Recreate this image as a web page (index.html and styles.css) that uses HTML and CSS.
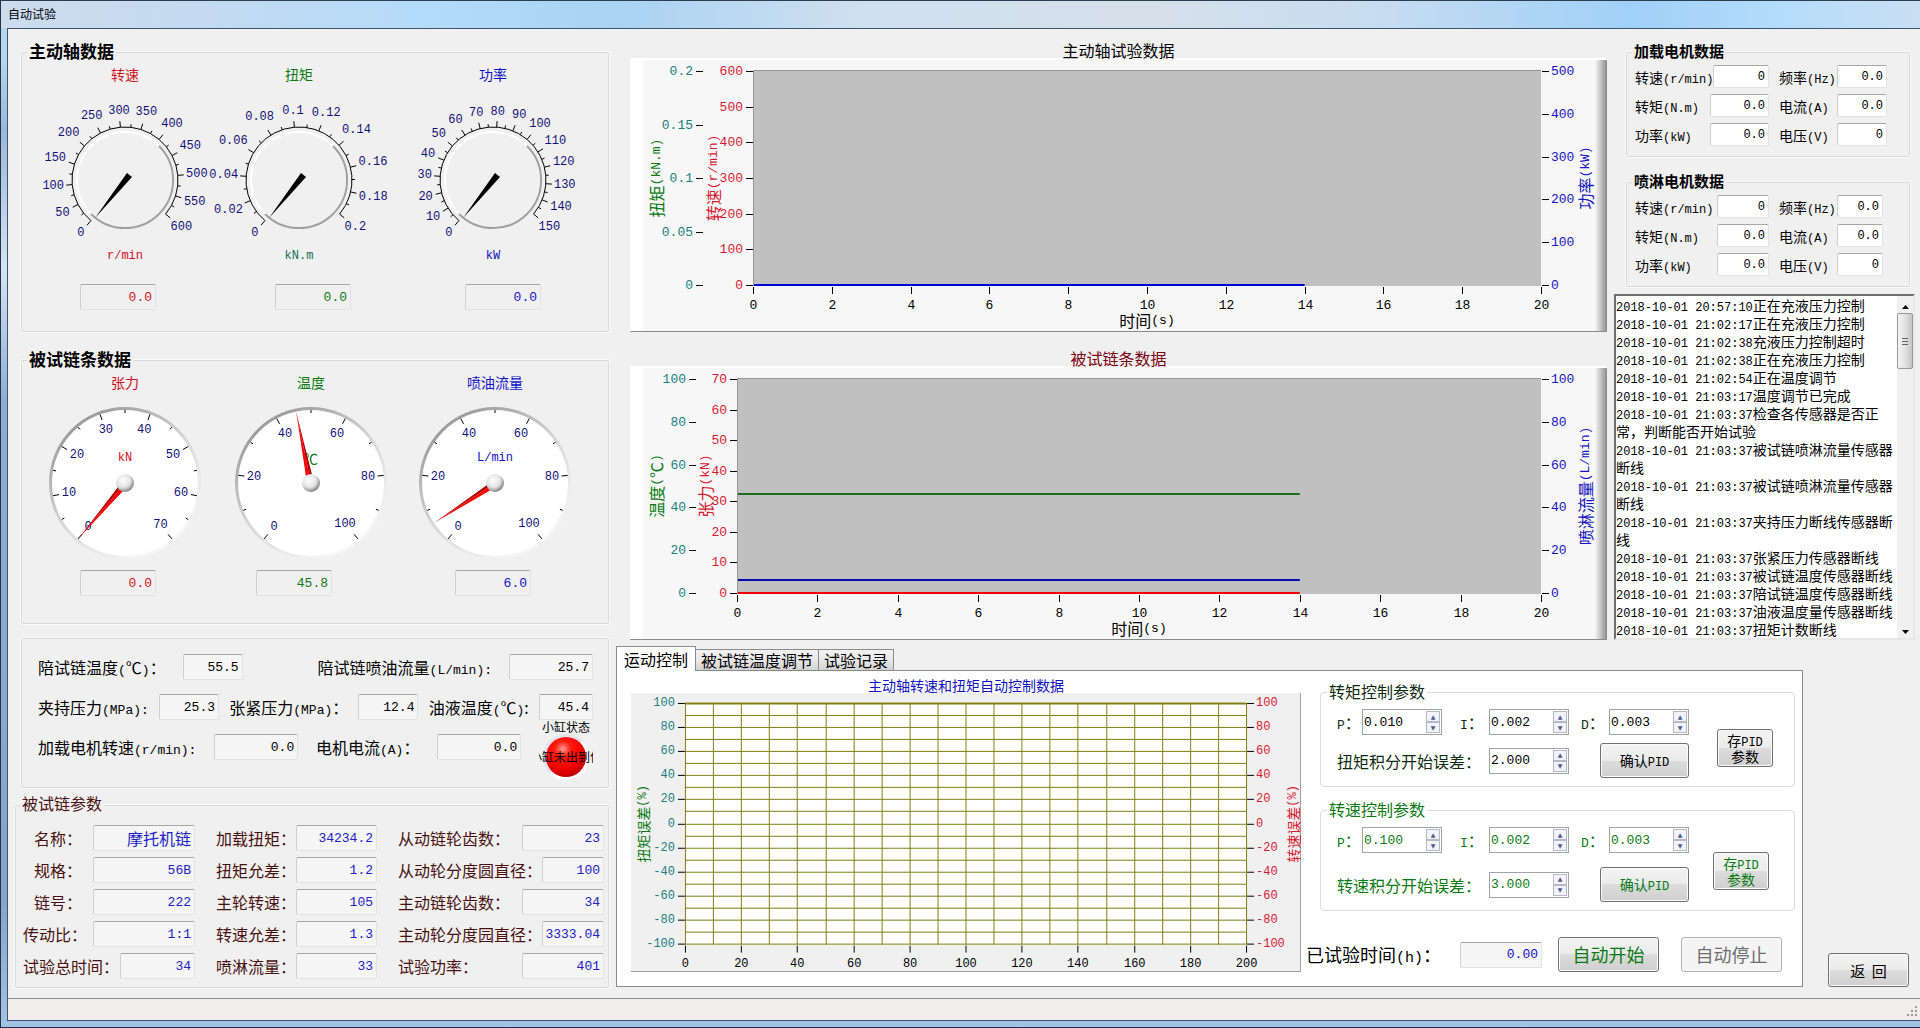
FILE: index.html
```
<!DOCTYPE html>
<html lang="zh-CN">

<head>
    <meta charset="utf-8">
    <title>自动试验</title>
    <link rel="stylesheet" href="styles.css">
</head>

<body>
    <header class="titlebar"><h1>自动试验</h1></header>

    <div class="frame">
    <main>
        <section class="left">
            <!-- driving shaft -->
            <fieldset class="group shaft">
                <legend class="bold">主动轴数据</legend>
                <div class="dials">
                    <div class="dial red">
                        <h3>转速</h3>
                        <svg class="knob" data-max="600" data-step="50" viewBox="0 0 174 164"></svg>
                        <span class="unit">r/min</span>
                    </div>
                    <div class="dial green">
                        <h3>扭矩</h3>
                        <svg class="knob" data-max="0.2" data-step="0.02" viewBox="0 0 174 164"></svg>
                        <span class="unit teal">kN.m</span>
                    </div>
                    <div class="dial blue">
                        <h3>功率</h3>
                        <svg class="knob" data-max="150" data-step="10" viewBox="0 0 174 164"></svg>
                        <span class="unit">kW</span>
                    </div>
                </div>
                <div class="readouts">
                    <input class="value red" aria-label="转速" value="0.0" readonly>
                    <input class="value green" aria-label="扭矩" value="0.0" readonly>
                    <input class="value blue" aria-label="功率" value="0.0" readonly>
                </div>
            </fieldset>

            <!-- tested chain -->
            <fieldset class="group chain">
                <legend class="bold">被试链条数据</legend>
                <div class="dials">
                    <div class="dial red">
                        <h3>张力</h3>
                        <svg class="gauge" data-max="70" data-step="10" data-value="0" data-unit="kN" viewBox="0 0 174 168"></svg>
                    </div>
                    <div class="dial green">
                        <h3>温度</h3>
                        <svg class="gauge" data-max="100" data-step="20" data-value="45.8" data-unit="℃" viewBox="0 0 174 168"></svg>
                    </div>
                    <div class="dial blue">
                        <h3>喷油流量</h3>
                        <svg class="gauge" data-max="100" data-step="20" data-value="6" data-unit="L/min" viewBox="0 0 174 168"></svg>
                    </div>
                </div>
                <div class="readouts">
                    <input class="value red" aria-label="张力" value="0.0" readonly>
                    <input class="value green" aria-label="温度" value="45.8" readonly>
                    <input class="value blue" aria-label="喷油流量" value="6.0" readonly>
                </div>
            </fieldset>

            <fieldset class="group sensors">
                <div class="row">
                    <label for="s1">陪试链温度<span class="en">(</span>℃<span class="en">)</span>：</label>
                    <input class="value w60" id="s1" value="55.5" readonly>
                    <label class="push" for="s2">陪试链喷油流量<span class="en">(L/min):</span></label>
                    <input class="value w84" id="s2" value="25.7" readonly>
                </div>
                <div class="row">
                    <label for="s3">夹持压力<span class="en">(MPa):</span></label>
                    <input class="value w60" id="s3" value="25.3" readonly>
                    <label for="s4">张紧压力<span class="en">(MPa)</span>：</label>
                    <input class="value w60" id="s4" value="12.4" readonly>
                    <label for="s5">油液温度<span class="en">(</span>℃<span class="en">)</span>:</label>
                    <input class="value w54" id="s5" value="45.4" readonly>
                </div>
                <div class="row">
                    <label for="s6">加载电机转速<span class="en">(r/min):</span></label>
                    <input class="value w84" id="s6" value="0.0" readonly>
                    <label for="s7">电机电流<span class="en">(A)</span>：</label>
                    <input class="value w84" id="s7" value="0.0" readonly>
                    <div class="led">
                        <span>小缸状态</span>
                        <div class="lamp"><i></i><b>小缸未出到位</b></div>
                    </div>
                </div>
            </fieldset>

            <fieldset class="group params">
                <legend>被试链参数</legend>
                <div class="cell indent"><label for="p1">名称：</label><input class="value cn w102" id="p1" value="摩托机链" readonly></div>
                <div class="cell"><label for="p2">加载扭矩：</label><input class="value w82" id="p2" value="34234.2" readonly></div>
                <div class="cell"><label for="p3">从动链轮齿数：</label><input class="value w82" id="p3" value="23" readonly></div>
                <div class="cell indent"><label for="p4">规格：</label><input class="value w102" id="p4" value="56B" readonly></div>
                <div class="cell"><label for="p5">扭矩允差：</label><input class="value w82" id="p5" value="1.2" readonly></div>
                <div class="cell"><label for="p6">从动轮分度圆直径：</label><input class="value w64" id="p6" value="100" readonly></div>
                <div class="cell indent"><label for="p7">链号：</label><input class="value w102" id="p7" value="222" readonly></div>
                <div class="cell"><label for="p8">主轮转速：</label><input class="value w82" id="p8" value="105" readonly></div>
                <div class="cell"><label for="p9">主动链轮齿数：</label><input class="value w82" id="p9" value="34" readonly></div>
                <div class="cell"><label for="p10">传动比：</label><input class="value w102" id="p10" value="1:1" readonly></div>
                <div class="cell"><label for="p11">转速允差：</label><input class="value w82" id="p11" value="1.3" readonly></div>
                <div class="cell"><label for="p12">主动轮分度园直径：</label><input class="value w64" id="p12" value="3333.04" readonly></div>
                <div class="cell"><label for="p13">试验总时间：</label><input class="value w75" id="p13" value="34" readonly></div>
                <div class="cell"><label for="p14">喷淋流量：</label><input class="value w82" id="p14" value="33" readonly></div>
                <div class="cell"><label for="p15">试验功率：</label><input class="value w82" id="p15" value="401" readonly></div>
            </fieldset>
        </section>

        <section class="right">
            <div class="top">
                <div class="scopes">
                    <h2>主动轴试验数据</h2>
                    <svg class="scope" id="shaft-chart" viewBox="0 0 977 274"></svg>
                    <h2 class="maroon">被试链条数据</h2>
                    <svg class="scope" id="chain-chart" viewBox="0 0 977 274"></svg>
                </div>

                <aside class="side">
                    <fieldset class="group motor">
                        <legend class="bold">加载电机数据</legend>
                        <div class="cell"><label for="m1">转速<span class="en">(r/min)</span></label><input class="value" id="m1" value="0" readonly></div>
                        <div class="cell"><label for="m2">频率<span class="en">(Hz)</span></label><input class="value" id="m2" value="0.0" readonly></div>
                        <div class="cell"><label for="m3">转矩<span class="en">(N.m)</span></label><input class="value" id="m3" value="0.0" readonly></div>
                        <div class="cell"><label for="m4">电流<span class="en">(A)</span></label><input class="value" id="m4" value="0.0" readonly></div>
                        <div class="cell"><label for="m5">功率<span class="en">(kW)</span></label><input class="value" id="m5" value="0.0" readonly></div>
                        <div class="cell"><label for="m6">电压<span class="en">(V)</span></label><input class="value" id="m6" value="0" readonly></div>
                    </fieldset>
                    <fieldset class="group motor spray">
                        <legend class="bold">喷淋电机数据</legend>
                        <div class="cell"><label for="n1">转速<span class="en">(r/min)</span></label><input class="value" id="n1" value="0" readonly></div>
                        <div class="cell"><label for="n2">频率<span class="en">(Hz)</span></label><input class="value" id="n2" value="0.0" readonly></div>
                        <div class="cell"><label for="n3">转矩<span class="en">(N.m)</span></label><input class="value" id="n3" value="0.0" readonly></div>
                        <div class="cell"><label for="n4">电流<span class="en">(A)</span></label><input class="value" id="n4" value="0.0" readonly></div>
                        <div class="cell"><label for="n5">功率<span class="en">(kW)</span></label><input class="value" id="n5" value="0.0" readonly></div>
                        <div class="cell"><label for="n6">电压<span class="en">(V)</span></label><input class="value" id="n6" value="0" readonly></div>
                    </fieldset>

                    <div class="log">
                        <div class="lines">
                            <p><time>2018-10-01 20:57:10</time>正在充液压力控制</p>
                            <p><time>2018-10-01 21:02:17</time>正在充液压力控制</p>
                            <p><time>2018-10-01 21:02:38</time>充液压力控制超时</p>
                            <p><time>2018-10-01 21:02:38</time>正在充液压力控制</p>
                            <p><time>2018-10-01 21:02:54</time>正在温度调节</p>
                            <p><time>2018-10-01 21:03:17</time>温度调节已完成</p>
                            <p><time>2018-10-01 21:03:37</time>检查各传感器是否正常，判断能否开始试验</p>
                            <p><time>2018-10-01 21:03:37</time>被试链喷淋流量传感器断线</p>
                            <p><time>2018-10-01 21:03:37</time>被试链喷淋流量传感器断线</p>
                            <p><time>2018-10-01 21:03:37</time>夹持压力断线传感器断线</p>
                            <p><time>2018-10-01 21:03:37</time>张紧压力传感器断线</p>
                            <p><time>2018-10-01 21:03:37</time>被试链温度传感器断线</p>
                            <p><time>2018-10-01 21:03:37</time>陪试链温度传感器断线</p>
                            <p><time>2018-10-01 21:03:37</time>油液温度量传感器断线</p>
                            <p><time>2018-10-01 21:03:37</time>扭矩计数断线</p>
                        </div>
                        <div class="scrollbar">
                            <button aria-label="向上"><svg width="7" height="4"><path d="M0 4L3.5 0L7 4z" /></svg></button>
                            <div class="thumb"></div>
                            <button class="down" aria-label="向下"><svg width="7" height="4"><path d="M0 0L3.5 4L7 0z" /></svg></button>
                        </div>
                    </div>
                </aside>
            </div>

            <div class="bottom">
                <div class="tabs">
                    <div class="tablist" role="tablist">
                        <button class="tab active" role="tab" aria-selected="true">运动控制</button>
                        <button class="tab" role="tab" aria-selected="false">被试链温度调节</button>
                        <button class="tab" role="tab" aria-selected="false">试验记录</button>
                    </div>
                    <div class="pane" role="tabpanel">
                        <div class="error-chart">
                            <h2>主动轴转速和扭矩自动控制数据</h2>
                            <svg id="error-chart" viewBox="0 0 671 279"></svg>
                        </div>
                        <div class="controls">
                            <fieldset class="pid torque">
                                <legend>转矩控制参数</legend>
                                <div class="pid-grid">
                                    <label for="tp"><span class="en">P</span>：</label>
                                    <span class="spin"><input type="number" step="0.001" id="tp" value="0.010"><button aria-label="增加">▲</button><button aria-label="减少">▼</button></span>
                                    <label for="ti"><span class="en">I</span>：</label>
                                    <span class="spin"><input type="number" step="0.001" id="ti" value="0.002"><button aria-label="增加">▲</button><button aria-label="减少">▼</button></span>
                                    <label for="td"><span class="en">D</span>：</label>
                                    <span class="spin"><input type="number" step="0.001" id="td" value="0.003"><button aria-label="增加">▲</button><button aria-label="减少">▼</button></span>
                                    <label class="wide" for="te">扭矩积分开始误差：</label>
                                    <span class="spin"><input type="number" step="0.001" id="te" value="2.000"><button aria-label="增加">▲</button><button aria-label="减少">▼</button></span>
                                    <button class="btn confirm">确认<span class="en">PID</span></button>
                                </div>
                                <button class="btn save">存<span class="en">PID</span><br>参数</button>
                            </fieldset>
                            <fieldset class="pid speed">
                                <legend>转速控制参数</legend>
                                <div class="pid-grid">
                                    <label for="sp"><span class="en">P</span>：</label>
                                    <span class="spin"><input type="number" step="0.001" id="sp" value="0.100"><button aria-label="增加">▲</button><button aria-label="减少">▼</button></span>
                                    <label for="si"><span class="en">I</span>：</label>
                                    <span class="spin"><input type="number" step="0.001" id="si" value="0.002"><button aria-label="增加">▲</button><button aria-label="减少">▼</button></span>
                                    <label for="sd"><span class="en">D</span>：</label>
                                    <span class="spin"><input type="number" step="0.001" id="sd" value="0.003"><button aria-label="增加">▲</button><button aria-label="减少">▼</button></span>
                                    <label class="wide" for="se">转速积分开始误差：</label>
                                    <span class="spin"><input type="number" step="0.001" id="se" value="3.000"><button aria-label="增加">▲</button><button aria-label="减少">▼</button></span>
                                    <button class="btn confirm">确认<span class="en">PID</span></button>
                                </div>
                                <button class="btn save">存<span class="en">PID</span><br>参数</button>
                            </fieldset>
                            <div class="run">
                                <label for="elapsed">已试验时间<span class="en">(h)</span>：</label>
                                <input class="value w82 blue" id="elapsed" value="0.00" readonly>
                                <button class="btn green">自动开始</button>
                                <button class="btn" disabled>自动停止</button>
                            </div>
                        </div>
                    </div>
                </div>
                <button class="btn back">返&nbsp; 回</button>
            </div>
        </section>
    </main>

    <footer class="statusbar">
        <svg width="12" height="12" fill="#9a9a9a"><path d="M8 0h2v2h-2zM4 4h2v2h-2zM8 4h2v2h-2zM0 8h2v2h-2zM4 8h2v2h-2zM8 8h2v2h-2z" /></svg>
    </footer>
    </div>

    <script src="script.js"></script>
</body>

</html>
```
FILE: styles.css
```
* {
    box-sizing: border-box;
    margin: 0;
    padding: 0;
}

body {
    --en: 13px;
    display: flex;
    flex-direction: column;
    min-height: 100vh;
    background: linear-gradient(#b8d4ee 60px, #9cb8d8 130px, #d4e4f4 270px, #8fadd4 400px, #86a3cc 900px, #a3c3e3);
    border-top: 1px solid #2c3e50;
    border-left: 1px solid #243444;
    border-bottom: 1px solid #1c2c44;
    font: 16px/20px "Noto Sans CJK SC", sans-serif;
    color: #000;
}

h1, h2, h3 {
    font-weight: normal;
}

.en, time, input, .unit {
    font-family: "Liberation Mono", monospace;
    font-size: var(--en);
    line-height: 1;
}

.red { color: #d01020; }
.green { color: #0a7a12; }
.blue { color: #1010c8; }
.teal { color: #107050; }

/* window */
.titlebar {
    height: 27px;
    padding: 3px 7px;
    background: linear-gradient(90deg, #cddcee, #c4daf0 10%, #b4dbfa 22%, #a9d2f3 32%, #cfe0ef 45%, #d6e0ea 60%, #c6dcf0 72%, #9fd0f8 85%, #b5dcfb 93%, #c9dff2);
}

.titlebar h1 {
    font-size: 12px;
}

.frame {
    flex: 1;
    display: flex;
    flex-direction: column;
    margin: 0 0 6px 6px;
    border: 1px solid #3d566e;
    border-right: 0;
    background: #f0f0f0;
}

main {
    flex: 1;
    display: grid;
    grid-template-columns: 594px 1fr;
    gap: 7px;
    padding: 13px 5px 10px 7px;
}

.statusbar {
    display: flex;
    justify-content: flex-end;
    align-items: flex-end;
    height: 22px;
    padding: 0 1px 2px 0;
    border-top: 1px solid #8c8c8c;
    background: #f1edec;
}

/* group boxes */
.group {
    min-width: 0;
    border: 1px solid #d6d8da;
    border-radius: 2px;
    box-shadow: 0 0 0 1px #fafafa;
}

.group legend {
    height: 20px;
    margin-left: 5px;
    padding: 0 2px;
    background: #f0f0f0;
    line-height: 17px;
}

legend.bold {
    font-size: 17px;
    font-weight: bold;
}

.value {
    height: 26px;
    min-width: 0;
    padding-right: 3px;
    border: 1px solid #e2e2e2;
    border-top-color: #a6a6a6;
    border-left-color: #cfcfcf;
    border-radius: 2px;
    background: #f5f5f5;
    text-align: right;
}

.value.cn {
    font-family: "Noto Sans CJK SC", sans-serif;
    font-size: 16px;
}

.w54 { width: 54px; }
.w60 { width: 60px; }
.w64 { width: 64px; }
.w75 { width: 75px; }
.w82 { width: 82px; }
.w84 { width: 84px; }
.w102 { width: 102px; }

/* left column */
.left {
    display: flex;
    flex-direction: column;
}

.left .group {
    margin-left: 6px;
}

.shaft {
    height: 290px;
}

.left .chain {
    height: 274px;
    margin-top: 18px;
}

.dials {
    display: grid;
    padding: 2px 0 0 16px;
}

.shaft .dials {
    grid-template-columns: 174px 174px 214px;
}

.chain .dials {
    grid-template-columns: 174px 198px 170px;
}

.dial {
    --en: 12px;
    display: flex;
    flex-direction: column;
    align-items: center;
    font-size: 14px;
}

.dial h3 {
    font-size: 14px;
}

.unit {
    line-height: 16px;
}

.knob {
    width: 174px;
    height: 164px;
    overflow: visible;
}

.gauge {
    width: 174px;
    height: 168px;
    margin-top: 2px;
    overflow: visible;
}

.readouts {
    display: grid;
    padding-left: 58px;
}

.shaft .readouts {
    grid-template-columns: 195px 190px 76px;
    margin-top: 20px;
}

.chain .readouts {
    grid-template-columns: 176px 199px 76px;
    margin-top: 8px;
}

.readouts .value {
    width: 76px;
    background: #f0f0f0;
}

.left .sensors {
    display: flex;
    flex-direction: column;
    height: 150px;
    margin-top: 14px;
    padding: 8px 15px 0 16px;
}

.row {
    display: flex;
    align-items: center;
    justify-content: space-between;
    height: 40px;
    white-space: nowrap;
}

.row .push {
    margin-left: 58px;
}

.led {
    display: flex;
    flex-direction: column;
    align-items: center;
    width: 54px;
    padding-top: 8px;
    font-size: 12px;
    line-height: 12px;
}

.lamp {
    display: grid;
    grid-template-columns: 54px;
    place-items: center;
    height: 48px;
    overflow: hidden;
}

.lamp i, .lamp b {
    grid-area: 1 / 1;
}

.lamp i {
    width: 46px;
    height: 46px;
    border: 3px solid #e2e4e8;
    border-right-color: #fff;
    border-bottom-color: #fff;
    border-radius: 50%;
    background: radial-gradient(circle at 42% 30%, #ff9a90, #ff1c10 22%, #f00000 55%, #900000);
}

.lamp b {
    font-weight: normal;
}

.left .params {
    display: grid;
    grid-template-columns: 172px 161px 206px;
    grid-auto-rows: 32px;
    justify-content: space-between;
    height: 193px;
    margin: 7px 0 0;
    padding: 7px 4px 0 7px;
    color: #4a1010;
}

.params legend {
    margin-left: -3px;
}

.params .value {
    color: #2020c8;
}

.cell {
    display: flex;
    align-items: center;
    justify-content: space-between;
    white-space: nowrap;
}

.cell.indent {
    padding-left: 11px;
}

/* charts */
.right {
    display: flex;
    flex-direction: column;
    gap: 6px;
    min-width: 0;
}

.top {
    display: flex;
    gap: 7px;
    padding-left: 14px;
}

.scopes {
    flex: 1;
    min-width: 0;
}

.scopes h2 {
    font-size: 16px;
    line-height: 16px;
    text-align: center;
}

.scopes h2.maroon {
    margin-top: 18px;
    color: #800010;
}

.scope {
    display: block;
    width: 100%;
    border-radius: 1px;
    background: linear-gradient(90deg, #fff 13px, #f7f7f7 13px, #f7f7f7 calc(100% - 12px), #8c8c8c);
    box-shadow: inset 0 2px #fff, inset -1px -1px #8a8a8a;
}

svg text {
    dominant-baseline: central;
    font-family: "Noto Sans CJK SC", sans-serif;
    font-size: 16px;
}

.dial text, .error-chart text {
    font-size: 14px;
}

svg text.num, svg .en {
    font-family: "Liberation Mono", monospace;
    font-size: var(--en);
}

#error-chart {
    --en: 12px;
    display: block;
    width: 100%;
    background: #f0f0f0;
    box-shadow: inset -1px -1px #a0a0a0;
}

.ax-red { fill: #d81830; }
.ax-teal { fill: #188080; }
.ax-green { fill: #087a10; }
.ax-blue { fill: #1414c0; }
.ax-navy { fill: #101078; }

/* motor data and message log */
.side {
    --en: 12px;
    display: flex;
    flex-direction: column;
    flex: none;
    width: 301px;
    font-size: 14px;
}

.motor {
    display: grid;
    grid-template-columns: 134px 108px;
    grid-auto-rows: 29px;
    column-gap: 10px;
    height: 115px;
    margin: 0 5px 0 12px;
    padding-left: 8px;
}

.motor legend {
    margin-left: -3px;
    font-size: 15px;
}

.motor .value {
    width: 59px;
    height: 23px;
    background: #fff;
}

.motor .cell:nth-of-type(even) .value {
    width: 50px;
}

.spray {
    grid-template-columns: 134px 104px;
    margin-top: 15px;
}

.spray .value {
    width: 52px;
}

.spray .cell:nth-of-type(even) .value {
    width: 46px;
}

.log {
    display: flex;
    flex: 1 1 0;
    min-height: 0;
    margin-top: 7px;
    border: 2px solid #e8e8e8;
    border-top-color: #6e6e6e;
    border-left-color: #6e6e6e;
    background: #fff;
    overflow: hidden;
}

.lines {
    flex: 1;
    line-height: 18px;
}

.lines p {
    margin-right: -1px;
}

.scrollbar {
    display: flex;
    flex-direction: column;
    width: 16px;
    background: #f0f0f0;
}

.scrollbar button {
    height: 17px;
    border: 0;
    background: none;
    line-height: 1;
}

.scrollbar .down {
    margin-top: auto;
}

.thumb {
    height: 56px;
    border: 1px solid #989898;
    border-radius: 2px;
    background: linear-gradient(#606060, #606060) 4px 24px / 6px 1px no-repeat,
        linear-gradient(#606060, #606060) 4px 27px / 6px 1px no-repeat,
        linear-gradient(#606060, #606060) 4px 30px / 6px 1px no-repeat,
        linear-gradient(90deg, #f4f4f4, #e2e2e2 50%, #c4c4c4);
}

/* tab control */
.bottom {
    display: flex;
    align-items: flex-end;
    gap: 25px;
    padding-right: 6px;
}

.tabs {
    flex: 1;
    min-width: 0;
}

.tablist {
    display: flex;
    align-items: flex-end;
    height: 24px;
}

.tab {
    height: 21px;
    padding: 0 5px;
    border: 1px solid #8a8a8a;
    border-left-width: 0;
    border-bottom: 0;
    background: linear-gradient(#f2f2f2, #e8e8e8 50%, #d2d2d2);
    font: 16px/20px "Noto Sans CJK SC", sans-serif;
}

.tab.active {
    z-index: 1;
    height: 25px;
    margin-bottom: -1px;
    padding: 0 7px;
    border-left-width: 1px;
    background: #fff;
}

.pane {
    display: flex;
    gap: 5px;
    height: 317px;
    padding: 6px 7px 0 14px;
    border: 1px solid #8a8a8a;
    background: #fff;
}

.error-chart {
    flex: 1;
    min-width: 0;
}

.error-chart h2 {
    font-size: 14px;
    line-height: 16px;
    text-align: center;
    color: #1010c0;
}

.controls {
    flex: none;
    width: 489px;
    padding-top: 5px;
}

.pid {
    display: flex;
    align-items: flex-start;
    height: 105px;
    margin-left: 14px;
    padding: 7px 18px 0 16px;
    border: 1px solid #dcdcdc;
    border-radius: 4px;
    color: #102c10;
}

.pid legend {
    height: 20px;
    margin-left: -10px;
    padding: 0 2px;
    line-height: 18px;
}

.pid.speed {
    height: 111px;
    margin-top: 13px;
}

.pid.speed, .speed .btn, .speed input {
    color: #0a7a12;
}

.pid-grid {
    display: grid;
    grid-template-columns: 25px 98px 29px 92px 28px 80px;
    row-gap: 8px;
    align-items: center;
}

.speed .pid-grid {
    row-gap: 14px;
}

.pid-grid .wide {
    grid-column: span 3;
}

.spin {
    display: grid;
    grid-template: 11px 11px / 1fr 14px;
    width: 80px;
    height: 26px;
    padding: 1px;
    border: 1px solid #a0a4a8;
    background: #fff;
}

.spin input {
    grid-row: span 2;
    min-width: 0;
    border: 0;
    outline: 0;
    background: none;
    appearance: textfield;
}

.spin input::-webkit-inner-spin-button {
    appearance: none;
}

.spin button {
    border: 1px solid #b8b8c4;
    background: #f2f2f8;
    color: #505c90;
    font: 6px/8px "DejaVu Sans", sans-serif;
}

.btn {
    border: 1px solid #707070;
    border-radius: 3px;
    background: linear-gradient(#f3f3f3, #ebebeb 50%, #dcdcdc 50%, #cfcfcf);
    box-shadow: inset 0 0 0 1px #fafafa;
    color: #000;
    font: 14px/15px "Noto Sans CJK SC", sans-serif;
}

.btn .en {
    font-size: 12px;
}

.confirm {
    grid-column: span 2;
    justify-self: end;
    width: 89px;
    height: 35px;
}

.save {
    width: 56px;
    height: 38px;
    margin: 20px 0 0 28px;
}

.speed .save {
    margin: 25px 0 0 24px;
}

.run {
    --en: 15px;
    display: flex;
    align-items: center;
    margin-top: 26px;
    font-size: 18px;
    white-space: nowrap;
}

.run label {
    width: 154px;
}

.run input {
    font-size: 13px;
}

.run .btn {
    width: 101px;
    height: 35px;
    margin-left: 16px;
    font-size: 18px;
}

.run .btn + .btn {
    margin-left: 22px;
}

.btn.green {
    color: #0a7a12;
}

.btn:disabled {
    border-color: #b0b0b0;
    background: #f4f4f4;
    color: #6e6e6e;
}

.back {
    width: 81px;
    height: 34px;
    font-size: 15px;
}
```
FILE: script.js
```
// wrap latin runs so they get the monospaced face
const mix = s => s.replace(/[\x21-\x7e]+/g, '<tspan class="en">$&</tspan>')

const polar = (cx, cy, r, deg) => {
    const a = deg * Math.PI / 180
    return [cx + r * Math.sin(a), cy - r * Math.cos(a)]
}

const line = (x1, y1, x2, y2, stroke = "#000", w = 1) =>
    `<line x1="${x1}" y1="${y1}" x2="${x2}" y2="${y2}" stroke="${stroke}" stroke-width="${w}"/>`

const label = (x, y, s, cls, anchor = "middle") =>
    `<text class="num ${cls}" x="${x}" y="${y}" text-anchor="${anchor}">${s}</text>`

// ticks and numbers round a dial; dir = 1 outside the circle, -1 inside
function ring(cx, cy, r, start, sweep, max, step, dir) {
    const n = Math.round(max / step)
    let out = ""
    for (let i = 0; i <= n * 2; i++) {
        const deg = start + sweep * i / (n * 2)
        const major = i % 2 == 0
        const [x1, y1] = polar(cx, cy, r, deg)
        const [x2, y2] = polar(cx, cy, r + dir * (major ? 6 : 3), deg)
        out += line(x1, y1, x2, y2)
        if (major) {
            const s = String(+(i / 2 * step).toFixed(2))
            const a = deg * Math.PI / 180
            const pad = 8 + Math.abs(Math.sin(a)) * s.length * 3.5 + Math.abs(Math.cos(a)) * 7
            const [x, y] = polar(cx, cy, r + dir * pad, deg)
            out += label(x, y, s, "ax-navy")
        }
    }
    return out
}

document.querySelectorAll("svg.knob").forEach(svg => {
    const cx = 87, cy = 96, r = 53
    const [sx, sy] = polar(cx, cy, r, -140)
    const [ex, ey] = polar(cx, cy, r, 130)
    svg.innerHTML = `
        <path d="M${sx} ${sy}A${r} ${r} 0 1 1 ${ex} ${ey}" fill="none" stroke="#000"/>
        <circle cx="${cx}" cy="${cy}" r="48" fill="none" stroke="#fff" stroke-width="2"/>
        <path d="M${cx + 34} ${cy - 34}A48 48 0 0 1 ${cx - 34} ${cy + 34}" fill="none" stroke="#a0a0a0" stroke-width="2"/>
        <path d="M${cx - 30} ${cy + 38}L${cx + 2} ${cy - 7}L${cx + 7} ${cy - 3}z"/>
        ${ring(cx, cy, r, -140, 270, +svg.dataset.max, +svg.dataset.step, 1)}`
})

document.querySelectorAll("svg.gauge").forEach((svg, i) => {
    const cx = 87, cy = 89, r = 73
    const { max, step, value, unit } = svg.dataset
    const deg = -140 + 280 * value / max
    svg.innerHTML = `
        <defs>
            <linearGradient id="rim${i}" x1="0.15" y1="0" x2="0.85" y2="1">
                <stop offset="0" stop-color="#8e8e8e"/><stop offset="0.5" stop-color="#d8d8d8"/><stop offset="1" stop-color="#fff"/>
            </linearGradient>
            <radialGradient id="hub${i}" cx="0.4" cy="0.35" r="0.65">
                <stop offset="0" stop-color="#fff"/><stop offset="0.6" stop-color="#e4e4e4"/><stop offset="1" stop-color="#858585"/>
            </radialGradient>
        </defs>
        <circle cx="${cx}" cy="${cy}" r="76" fill="url(#rim${i})"/>
        <circle cx="${cx}" cy="${cy}" r="${r}" fill="#fff"/>
        ${ring(cx, cy, r, -140, 280, +max, +step, -1)}
        <text x="${cx}" y="${cy - 25}" text-anchor="middle" fill="currentColor">${mix(unit)}</text>
        <path d="M${cx - 4} ${cy}L${cx} ${cy - 73}L${cx} ${cy}z" fill="#f00" transform="rotate(${deg} ${cx} ${cy})"/>
        <path d="M${cx} ${cy}L${cx} ${cy - 73}L${cx + 3} ${cy}z" fill="#b00000" transform="rotate(${deg} ${cx} ${cy})"/>
        <circle cx="${cx}" cy="${cy}" r="9" fill="url(#hub${i})"/>`
})

// ---- charts ----

function yAxis(c, ax) {
    let out = ""
    const n = Math.round((ax.max - ax.min) / ax.step)
    for (let i = 0; i <= n; i++) {
        const y = Math.round(c.bottom - (c.bottom - c.top) * i / n) - .5
        const s = +(ax.min + i * ax.step).toFixed(2)
        out += line(ax.x, y, ax.x + 7, y)
        out += ax.right ? label(ax.x + 9, y, s, ax.cls, "start") : label(ax.x - 3, y, s, ax.cls, "end")
    }
    return out + `<text class="${ax.titleCls || ax.cls}" text-anchor="middle" transform="translate(${ax.tx} ${c.mid}) rotate(-90)">${mix(ax.title)}</text>`
}

function chart(id, c) {
    const w = c.right - c.left, h = c.bottom - c.top
    let out = `<rect x="${c.left}" y="${c.top - 2}" width="${w}" height="${h + 2}" fill="${c.fill}"/>`
    if (c.grid) {
        for (let i = 0; i <= 20; i++) {
            const x = Math.round(c.left + w * i / 20) + .5
            const y = Math.round(c.top + h * i / 20) - .5
            out += line(x, c.top - 1, x, c.bottom, "#808010")
            out += line(c.left, y, c.right, y, "#808010", i == 0 ? 2 : 1)
        }
    } else {
        out += `<path d="M${c.left + .5} ${c.bottom}V${c.top - 1.5}H${c.right}" fill="none" stroke="#969696"/>`
    }
    for (let i = 0; i <= 10; i++) {
        const x = Math.round(c.left + w * i / 10) + .5
        out += line(x, c.bottom + 1, x, c.bottom + 8)
        out += label(x, c.bottom + 19, i * c.max / 10, "")
    }
    c.axes.forEach(ax => out += yAxis(c, ax))
    c.series.forEach(s => out += line(c.left + 1, s.y, c.left + w * (s.to || .7), s.y, s.color, 2))
    if (c.title) out += `<text x="${(c.left + c.right) / 2}" y="${c.bottom + 34}" text-anchor="middle">${mix(c.title)}</text>`
    document.getElementById(id).innerHTML = out
}

chart("shaft-chart", {
    left: 123, right: 911, top: 14, bottom: 228, mid: 120, max: 20, fill: "#c0c0c0", title: "时间(s)",
    axes: [
        { x: 66, min: 0, max: 0.2, step: 0.05, cls: "ax-teal", titleCls: "ax-green", title: "扭矩(kN.m)", tx: 26 },
        { x: 116, min: 0, max: 600, step: 100, cls: "ax-red", title: "转速(r/min)", tx: 83 },
        { x: 912, min: 0, max: 500, step: 100, cls: "ax-blue", title: "功率(kW)", tx: 955, right: true }
    ],
    series: [{ y: 227, color: "#0000d8" }]
})

chart("chain-chart", {
    left: 107, right: 911, top: 14, bottom: 228, mid: 120, max: 20, fill: "#c0c0c0", title: "时间(s)",
    axes: [
        { x: 59, min: 0, max: 100, step: 20, cls: "ax-teal", titleCls: "ax-green", title: "温度(℃)", tx: 26 },
        { x: 100, min: 0, max: 70, step: 10, cls: "ax-red", title: "张力(kN)", tx: 75 },
        { x: 912, min: 0, max: 100, step: 20, cls: "ax-blue", title: "喷淋流量(L/min)", tx: 955, right: true }
    ],
    series: [
        { y: 128, color: "#187018" },
        { y: 214, color: "#0808b0" },
        { y: 227, color: "#f00000" }
    ]
})

chart("error-chart", {
    left: 54, right: 616, top: 11, bottom: 252, mid: 131, max: 200, fill: "#fff", grid: true,
    axes: [
        { x: 47, min: -100, max: 100, step: 20, cls: "ax-teal", titleCls: "ax-green", title: "扭矩误差(%)", tx: 12 },
        { x: 617, min: -100, max: 100, step: 20, cls: "ax-red", title: "转速误差(%)", tx: 663, right: true }
    ],
    series: []
})
```
